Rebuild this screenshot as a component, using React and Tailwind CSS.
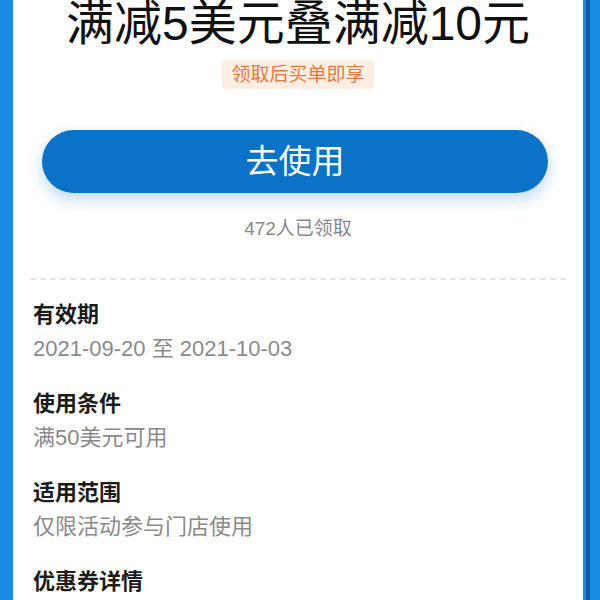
const sections = [
  { label: "有效期", value: "2021-09-20 至 2021-10-03" },
  { label: "使用条件", value: "满50美元可用" },
  { label: "适用范围", value: "仅限活动参与门店使用" },
  { label: "优惠券详情", value: "" },
];

const App = () => {
  return (
    <div
      className="flex h-[600px] w-[600px] overflow-hidden bg-[#1a8de3]"
      style={{ fontFamily: '"Liberation Sans", "Noto Sans CJK SC", sans-serif' }}
    >
      {/* left edge */}
      <div className="w-[13px] shrink-0 bg-[#1a8de3]" />

      {/* coupon card */}
      <div className="flex w-[570px] shrink-0 flex-col bg-white">
        <h1 className="pt-[1px] text-center text-[48px] leading-[46px] font-normal text-[#111111]">
          满减5美元叠满减10元
        </h1>

        <div className="mt-[13px] flex justify-center">
          <span className="rounded-[3px] bg-[#fdeee3] px-[9px] py-[4px] text-[19px] leading-[21px] text-[#e8793c]">
            领取后买单即享
          </span>
        </div>

        <button className="mt-[41px] ml-[29px] mr-[35px] h-[63px] rounded-full bg-[#0a73c7] text-[33px] text-white shadow-[0_6px_16px_rgba(10,115,199,0.28)]">
          去使用
        </button>

        <p className="mt-[24px] text-center text-[19px] leading-[24px] text-[#888888]">
          472人已领取
        </p>

        <div className="mx-[17px] mt-[37px] border-t-2 border-dashed border-[#e4e4e4]" />

        <div className="mt-[20px] flex flex-col gap-[25px] px-[20px]">
          {sections.map((s) => (
            <div key={s.label} className="flex flex-col gap-[4px]">
              <h3 className="text-[22px] leading-[30px] font-bold text-[#1c1c1c]">
                {s.label}
              </h3>
              {s.value && (
                <p className="text-[22px] leading-[30px] text-[#8a8a8a]">{s.value}</p>
              )}
            </div>
          ))}
        </div>
      </div>

      {/* right edge */}
      <div className="w-[3px] shrink-0 bg-[#1a8de3]" />
      <div className="w-[4px] shrink-0 bg-[#0d5fa8]" />
      <div className="flex-1 bg-[#1a8de3]" />
    </div>
  );
};

export default App;
